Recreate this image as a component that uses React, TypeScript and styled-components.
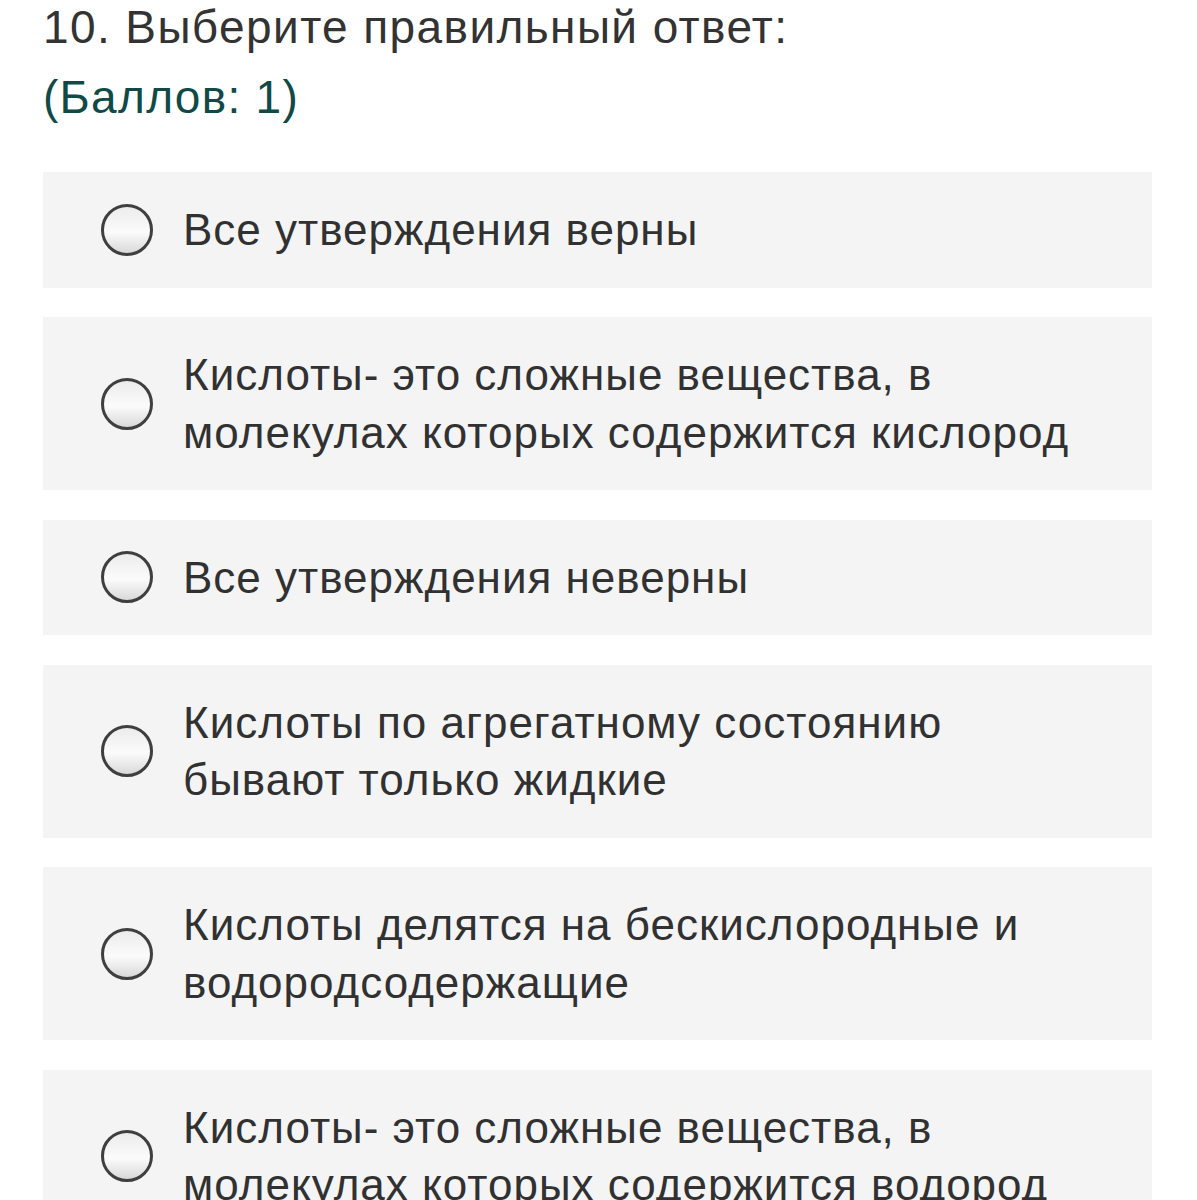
import React from "react";
import styled, { createGlobalStyle } from "styled-components";

const options = [
  "Все утверждения верны",
  "Кислоты- это сложные вещества, в молекулах которых содержится кислород",
  "Все утверждения неверны",
  "Кислоты по агрегатному состоянию бывают только жидкие",
  "Кислоты делятся на бескислородные и водородсодержащие",
  "Кислоты- это сложные вещества, в молекулах которых содержится водород",
];

export default function App() {
  return (
    <>
      <GlobalStyle />
      <Page>
        <Question>
          <Title>10. Выберите правильный ответ:</Title>
          <Points>(Баллов: 1)</Points>
        </Question>
        <OptionList>
          {options.map((text) => (
            <Option key={text}>
              <Radio />
              <OptionText>{text}</OptionText>
            </Option>
          ))}
        </OptionList>
      </Page>
    </>
  );
}

const GlobalStyle = createGlobalStyle`
  body {
    margin: 0;
    background: #ffffff;
    font-family: "Liberation Sans", Arial, sans-serif;
  }
`;

const Page = styled.div`
  padding: 0 45px 0 43px;
  height: 1200px;
  overflow: hidden;
`;

const Question = styled.div`
  margin-top: -8px;
  margin-bottom: 40px;
`;

const Title = styled.div`
  font-size: 46px;
  line-height: 70px;
  color: #333333;
  letter-spacing: 1.4px;
`;

const Points = styled.div`
  font-size: 46px;
  line-height: 70px;
  color: #0f4a47;
  letter-spacing: 1.3px;
`;

const OptionList = styled.div`
  display: flex;
  flex-direction: column;
  gap: 29.5px;
`;

const Option = styled.div`
  display: flex;
  align-items: center;
  background: #f4f4f5;
  padding: 29px 60px 29px 58px;
`;

const Radio = styled.span`
  flex: none;
  width: 46px;
  height: 46px;
  border: 3px solid #3f3f3f;
  border-radius: 50%;
  background: linear-gradient(#ececec, #fbfbfb 55%, #d9d9d9);
  margin-right: 30px;
`;

const OptionText = styled.div`
  font-size: 44px;
  line-height: 57.5px;
  color: #313131;
  letter-spacing: 1px;
`;
